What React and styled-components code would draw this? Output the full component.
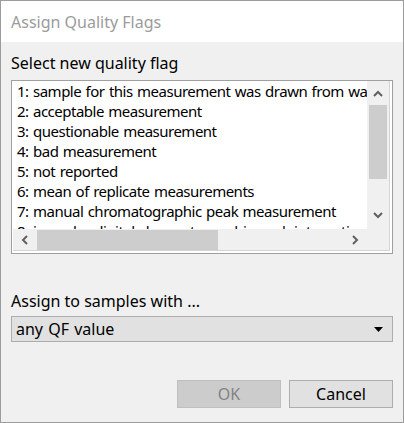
import React from 'react';
import styled, { createGlobalStyle } from 'styled-components';

const Global = createGlobalStyle`
  html, body { margin: 0; padding: 0; background: #f0f0f0; }
  * { box-sizing: border-box; }
`;

const flags = [
  '1: sample for this measurement was drawn from water bottle',
  '2: acceptable measurement',
  '3: questionable measurement',
  '4: bad measurement',
  '5: not reported',
  '6: mean of replicate measurements',
  '7: manual chromatographic peak measurement',
  '8: irregular digital chromatographic peak integration',
];

const Window = styled.div`
  width: 404px;
  height: 423px;
  display: flex;
  flex-direction: column;
  border: 1px solid #9c9c9c;
  font-family: "Noto Sans", "Open Sans", sans-serif;
  font-size: 16px;
  color: #000;
`;

const TitleBar = styled.div`
  height: 41px;
  background: #fff;
  color: #9b9b9b;
  display: flex;
  align-items: center;
  padding-left: 10px;
`;

const Body = styled.div`
  flex: 1;
  background: #f0f0f0;
  display: flex;
  flex-direction: column;
  padding: 11px 10px 0 10px;
`;

const Label = styled.div`
  line-height: 20px;
  margin-top: ${p => p.$top || 0}px;
`;

const ListFrame = styled.div`
  margin-top: 7px;
  height: 174px;
  border: 1px solid #a0a0a0;
  background: #fff;
  padding: 0 2px 2px 1px;
`;

const ListInner = styled.div`
  height: 100%;
  display: grid;
  grid-template-columns: minmax(0, 1fr) 22px;
  grid-template-rows: minmax(0, 1fr) 21px;
  border-right: 1px solid #d4d4d4;
  border-bottom: 1px solid #d4d4d4;
`;

const Items = styled.div`
  overflow: hidden;
  white-space: nowrap;
  padding-left: 4px;
  font-size: 15px;
  letter-spacing: -0.5px;
  word-spacing: 1px;
`;

const Item = styled.div`
  height: 20px;
  line-height: 20px;
`;

const VScroll = styled.div`
  background: #f0f0f0;
  display: flex;
  flex-direction: column;
  align-items: center;
  padding-top: 2px;
`;

const HScroll = styled.div`
  background: #f0f0f0;
  display: flex;
  align-items: center;
`;

const Corner = styled.div`
  background: #f0f0f0;
`;

const Arrow = styled.div`
  width: ${p => p.$w}px;
  height: ${p => p.$h}px;
  display: flex;
  align-items: center;
  justify-content: center;
  flex-shrink: 0;
`;

const Spacer = styled.div`
  flex: 1;
`;

const VThumb = styled.div`
  width: 18px;
  height: 74px;
  background: #cdcdcd;
`;

const HThumb = styled.div`
  width: 181px;
  height: 20px;
  background: #cdcdcd;
`;

const Combo = styled.div`
  margin-top: 5px;
  height: 26px;
  background: #e1e1e1;
  border: 1px solid #adadad;
  display: flex;
  align-items: center;
  justify-content: space-between;
  padding: 0 9px 0 4px;
  word-spacing: 1px;
`;

const Buttons = styled.div`
  margin-top: 38px;
  display: flex;
  justify-content: flex-end;
  gap: 8px;
`;

const Button = styled.div`
  width: 104px;
  height: 28px;
  display: flex;
  align-items: center;
  justify-content: center;
  background: ${p => (p.$disabled ? '#cccccc' : '#e1e1e1')};
  border: 1px solid ${p => (p.$disabled ? '#bfbfbf' : '#adadad')};
  color: ${p => (p.$disabled ? '#838383' : '#000')};
`;

const Chevron = ({ dir }) => {
  const d = {
    up: 'M1 6 L5 2 L9 6',
    down: 'M1 2 L5 6 L9 2',
    left: 'M6 1 L2 5 L6 9',
    right: 'M2 1 L6 5 L2 9',
  }[dir];
  const vert = dir === 'up' || dir === 'down';
  return (
    <svg width={vert ? 10 : 8} height={vert ? 8 : 10} viewBox={vert ? '0 0 10 8' : '0 0 8 10'}>
      <path d={d} fill="none" stroke="#606060" strokeWidth="2" />
    </svg>
  );
};

export default function App() {
  return (
    <>
      <Global />
      <Window>
        <TitleBar>Assign Quality Flags</TitleBar>
        <Body>
          <Label>Select new quality flag</Label>
          <ListFrame>
            <ListInner>
              <Items>
                {flags.map(f => <Item key={f}>{f}</Item>)}
              </Items>
              <VScroll>
                <Arrow $w={20} $h={22}><Chevron dir="up" /></Arrow>
                <VThumb />
                <Spacer />
                <Arrow $w={20} $h={28}><Chevron dir="down" /></Arrow>
              </VScroll>
              <HScroll>
                <Arrow $w={24} $h={20}><Chevron dir="left" /></Arrow>
                <HThumb />
                <Spacer />
                <Arrow $w={24} $h={20}><Chevron dir="right" /></Arrow>
              </HScroll>
              <Corner />
            </ListInner>
          </ListFrame>
          <Label $top={37}>Assign to samples with ...</Label>
          <Combo>
            <span>any QF value</span>
            <svg width="9" height="5" viewBox="0 0 9 5"><path d="M0 0 H9 L4.5 5 Z" fill="#000" /></svg>
          </Combo>
          <Buttons>
            <Button $disabled>OK</Button>
            <Button>Cancel</Button>
          </Buttons>
        </Body>
      </Window>
    </>
  );
}
